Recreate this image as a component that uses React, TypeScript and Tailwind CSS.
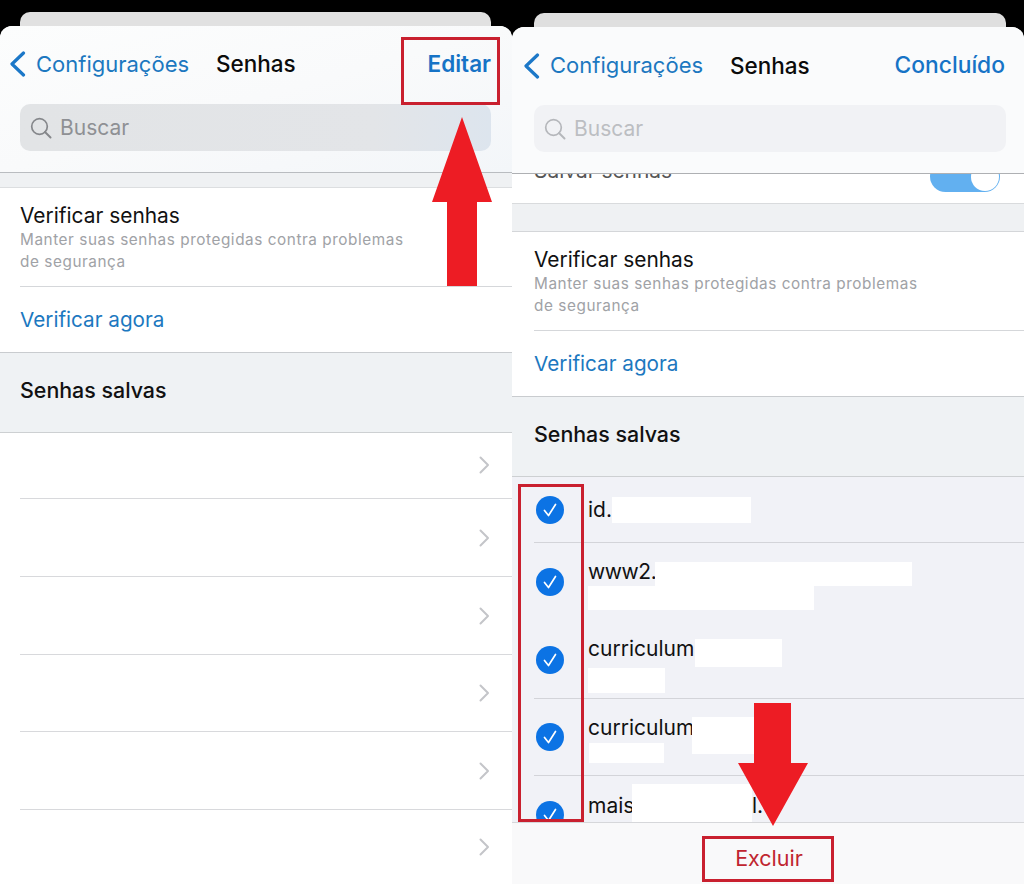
const font = { fontFamily: "Inter, 'Liberation Sans', sans-serif" };

function Back() {
  return (
    <svg width="17" height="26" viewBox="0 0 17 26" fill="none" className="shrink-0">
      <path d="M14.5 2 L3 13 L14.5 24" stroke="#1c78c8" strokeWidth="3.2" strokeLinecap="round" strokeLinejoin="round" />
    </svg>
  );
}

function Glass({ color }: { color: string }) {
  return (
    <svg width="22" height="22" viewBox="0 0 22 22" fill="none" className="shrink-0">
      <circle cx="9.5" cy="9.5" r="7.8" stroke={color} strokeWidth="1.7" />
      <path d="M15 15 L20.5 20.5" stroke={color} strokeWidth="2" strokeLinecap="round" />
    </svg>
  );
}

function Chevron() {
  return (
    <svg width="11" height="18" viewBox="0 0 11 18" fill="none" className="shrink-0">
      <path d="M1.5 1.5 L9 9 L1.5 16.5" stroke="#c4c5c9" strokeWidth="2" strokeLinecap="round" strokeLinejoin="round" />
    </svg>
  );
}

function Check({ cut }: { cut?: boolean }) {
  return (
    <svg width="28" height="28" viewBox="0 0 28 28" className={cut ? "shrink-0 self-start mt-[25px]" : "shrink-0"}>
      <circle cx="14" cy="14" r="14" fill="#0c73e4" />
      <path d="M8.5 14.5 L12.5 19.5 L19.5 8.5" fill="none" stroke="#fff" strokeWidth="1.7" strokeLinecap="round" strokeLinejoin="round" />
    </svg>
  );
}

function VerifyBlock({ pad }: { pad: string }) {
  return (
    <div className={"bg-white border-b border-[#c9cccf] " + pad}>
      <div className="h-[99px] border-b border-[#d5d7da] pt-[15px]">
        <div className="text-[20.9px] leading-[26px] text-[#111]">Verificar senhas</div>
        <div className="text-[15.3px] leading-[22px] tracking-[0.57px] text-[#a0a2a6]">
          Manter suas senhas protegidas contra problemas
          <br />
          de segurança
        </div>
      </div>
      <div className="h-[65px] flex items-center pt-[1px] text-[20.7px] text-[#1c78c0]">Verificar agora</div>
    </div>
  );
}

function ChevronRow({ h, last }: { h: string; last?: boolean }) {
  return (
    <div className={"ml-[20px] flex items-center justify-end pr-[22px] " + h + (last ? "" : " border-b border-[#d8d9dc]")}>
      <Chevron />
    </div>
  );
}

export default function App() {
  return (
    <div className="w-[1024px] h-[884px] bg-black overflow-hidden relative grid grid-cols-2" style={font}>
      {/* Left phone */}
      <div className="flex flex-col h-[884px] overflow-hidden">
        <div className="mt-[12px] ml-[20px] mr-[21px] h-[14px] rounded-t-[10px] bg-[#e1e1e1] shrink-0" />
        <div className="flex-1 flex flex-col rounded-t-[12px] overflow-hidden bg-white">
          <div className="h-[147px] shrink-0 bg-gradient-to-br from-[#fcfdfd] via-[#f9fafb] to-[#f3f6f9] border-b border-[#b9bcc0]">
            <div className="h-[78px] pb-[2px] pl-[9px] pr-[21px] flex items-center text-[22px]">
              <Back />
              <span className="ml-[10px] w-[180px] text-[#1c78c0] whitespace-nowrap">Configurações</span>
              <span className="text-[22.5px] font-medium text-[#0b0b0b]">Senhas</span>
              <span className="ml-auto text-[22.5px] font-semibold text-[#1673c6]">Editar</span>
            </div>
            <div className="ml-[20px] mr-[21px] h-[47px] rounded-[10px] bg-gradient-to-r from-[#e2e4e6] via-[#e3e5e8] via-75% to-[#dde5ee] flex items-center pl-[10px] gap-[8px] text-[21px] text-[#8e9094]">
              <Glass color="#85878b" />
              <span>Buscar</span>
            </div>
          </div>
          <div className="h-[15px] shrink-0 bg-[#eff1f3] border-b border-[#dcdee0]" />
          <VerifyBlock pad="pl-[20px]" />
          <div className="h-[80px] shrink-0 bg-[#eff2f4] border-b border-[#cdd0d2] pl-[20px] pt-[23px] text-[21.4px] leading-[28px] font-medium text-[#111]">
            Senhas salvas
          </div>
          <ChevronRow h="h-[66px] pb-[2px]" />
          <ChevronRow h="h-[78px]" />
          <ChevronRow h="h-[78px]" />
          <ChevronRow h="h-[77px]" />
          <ChevronRow h="h-[78px]" />
          <ChevronRow h="h-[74px]" last />
        </div>
      </div>

      {/* Right phone */}
      <div className="flex flex-col h-[884px] overflow-hidden">
        <div className="mt-[13px] ml-[22px] mr-[18px] h-[14px] rounded-t-[10px] bg-[#dfdfdf] shrink-0" />
        <div className="flex-1 flex flex-col rounded-t-[12px] overflow-hidden bg-white">
          <div className="h-[147px] shrink-0 bg-[#fafbfc] border-b border-[#aeb0b3]">
            <div className="h-[78px] pb-[1px] pl-[11px] pr-[19px] flex items-center text-[22px]">
              <Back />
              <span className="ml-[10px] w-[180px] text-[#1c78c0] whitespace-nowrap">Configurações</span>
              <span className="text-[22.5px] font-medium text-[#0b0b0b]">Senhas</span>
              <span className="ml-auto text-[22.8px] font-medium text-[#1673c6]">Concluído</span>
            </div>
            <div className="ml-[22px] mr-[18px] h-[47px] rounded-[10px] bg-[#f1f2f5] flex items-center pl-[10px] gap-[8px] text-[21px] text-[#bcbec2]">
              <Glass color="#b5b7bb" />
              <span>Buscar</span>
            </div>
          </div>
          <div className="h-[30px] shrink-0 bg-white border-b border-[#d9dbdd] overflow-hidden flex pl-[22px] pr-[24px] items-start justify-between">
            <span className="-mt-[16px] text-[20.9px] leading-[26px] text-[#555]">Salvar senhas</span>
            <div className="-mt-[13px] w-[70px] h-[31px] rounded-full bg-[#62b0f0] flex justify-end p-[2px] pr-[1px]">
              <div className="w-[28px] h-[28px] rounded-full bg-white" />
            </div>
          </div>
          <div className="h-[28px] shrink-0 bg-[#eff1f3] border-b border-[#d4d6d9]" />
          <VerifyBlock pad="pl-[22px]" />
          <div className="h-[80px] shrink-0 bg-[#eff2f4] border-b border-[#cdd0d2] pl-[22px] pt-[23px] text-[21.4px] leading-[28px] font-medium text-[#111]">
            Senhas salvas
          </div>

          <div className="flex-1 bg-[#f1f2f7] text-[21px] text-[#111] overflow-hidden">
            <div className="h-[66px] ml-[22px] pl-[2px] border-b border-[#d3d4d9] flex items-center gap-[24px]">
              <Check />
              <div className="flex items-center">
                <span className="w-[24px]">id.</span>
                <div className="w-[139px] h-[26px] bg-white" />
              </div>
            </div>
            <div className="h-[78px] ml-[22px] pl-[2px] flex items-center gap-[24px]">
              <Check />
              <div className="flex flex-col mt-[8px]">
                <div className="flex items-start">
                  <span className="w-[67px] tracking-[-0.4px] leading-[20px]">www2.</span>
                  <div className="w-[257px] h-[24px] bg-white" />
                </div>
                <div className="w-[226px] h-[24px] bg-white" />
              </div>
            </div>
            <div className="h-[78px] ml-[22px] pl-[2px] border-b border-[#d3d4d9] flex items-center gap-[24px]">
              <Check />
              <div className="flex flex-col gap-[1px] mt-[12px]">
                <div className="flex items-start">
                  <span className="w-[107px] leading-[20px]">curriculum</span>
                  <div className="w-[87px] h-[28px] bg-white" />
                </div>
                <div className="w-[77px] h-[25px] bg-white" />
              </div>
            </div>
            <div className="h-[77px] ml-[22px] pl-[2px] border-b border-[#d3d4d9] flex items-center gap-[24px]">
              <Check />
              <div className="flex flex-col mt-[6px]">
                <div className="flex items-start h-[26px]">
                  <span className="w-[104px] leading-[22px]">curriculum</span>
                  <div className="w-[63px] h-[37px] bg-white" />
                </div>
                <div className="w-[75px] h-[20px] bg-white ml-[1px]" />
              </div>
            </div>
            <div className="h-[46px] ml-[22px] pl-[2px] flex items-start gap-[24px] overflow-hidden">
              <Check cut />
              <div className="flex items-start pt-[8px]">
                <span className="leading-[44px] w-[44px]">mais</span>
                <div className="w-[120px] h-[38px] bg-white" />
                <span className="leading-[44px]">l.</span>
              </div>
            </div>
          </div>

          <div className="h-[62px] shrink-0 bg-[#f9f9fa] border-t border-[#d6d7da] flex justify-center pt-[18px] text-[21.5px] leading-[34px] text-[#c0252f]">
            <span className="ml-[2px]">Excluir</span>
          </div>
        </div>
      </div>

      {/* Annotations over the screenshots */}
      <div className="absolute left-[401px] top-[37px] w-[99px] h-[68px] border-[3px] border-[#c9202f]" />
      <div className="absolute left-[518px] top-[484px] w-[66px] h-[338px] border-[3px] border-[#c9202f]" />
      <div className="absolute left-[702px] top-[836px] w-[132px] h-[46px] border-[3px] border-[#c9202f]" />
      <svg className="absolute left-0 top-0" width="1024" height="884" viewBox="0 0 1024 884">
        <polygon points="462,117 492,202 477,202 477,286 447,286 447,202 432,202" fill="#ed1c24" />
        <polygon points="754,703 791,703 791,763 808,763 773,826 738,763 754,763" fill="#ed1c24" />
      </svg>
    </div>
  );
}
